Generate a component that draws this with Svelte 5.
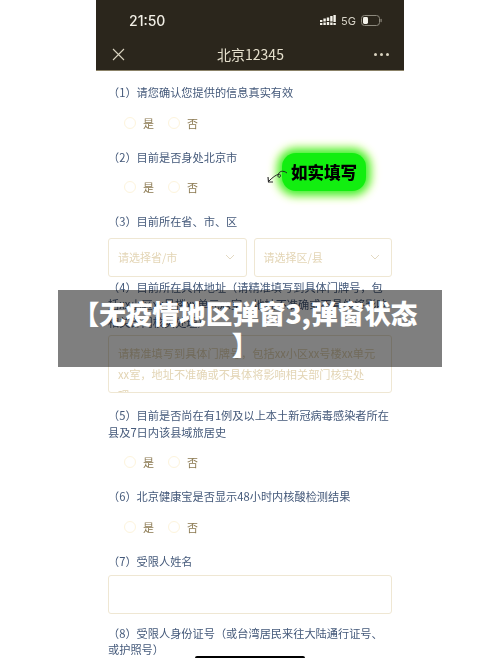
<script>
  const yesNo = ['是', '否'];
</script>

<div class="phone">
  <header class="top">
    <div class="status">
      <span class="time">21:50</span>
      <div class="status-right">
        <svg class="signal" width="16" height="11" viewBox="0 0 16 11">
          <rect x="0" y="5" width="2.4" height="2" />
          <rect x="0" y="8" width="2.4" height="2" />
          <rect x="3.4" y="3.5" width="2.4" height="3" />
          <rect x="3.4" y="7.5" width="2.4" height="2.5" />
          <rect x="6.8" y="2.5" width="2.4" height="3.5" />
          <rect x="6.8" y="7" width="2.4" height="3" />
          <rect x="10.2" y="1" width="2.4" height="5.5" />
          <rect x="10.2" y="7.5" width="2.4" height="2.5" />
          <rect x="13.4" y="0" width="2.4" height="7" />
          <rect x="13.4" y="8" width="2.4" height="2" />
        </svg>
        <span class="net">5G</span>
        <svg class="battery" width="21" height="11" viewBox="0 0 21 11">
          <rect x="0.5" y="0.5" width="18" height="10" rx="3" fill="none" stroke="#8d897d" />
          <rect x="2" y="2" width="5" height="7" rx="1.4" fill="#f4f2ea" />
          <rect x="19.5" y="3.8" width="1.2" height="3.4" rx="0.6" fill="#8d897d" />
        </svg>
      </div>
    </div>
    <nav class="bar">
      <svg class="close" width="13" height="13" viewBox="0 0 13 13">
        <path d="M1 1 L12 12 M12 1 L1 12" fill="none" stroke="#d9d3c0" stroke-width="1.1" />
      </svg>
      <span class="title">北京12345</span>
      <div class="more"><i></i><i></i><i></i></div>
    </nav>
  </header>

  <main class="form">
    <p class="q first">（1）请您确认您提供的信息真实有效</p>
    <div class="radios">
      {#each yesNo as opt}
        <span class="radio"></span><span class="opt">{opt}</span>
      {/each}
    </div>

    <p class="q">（2）目前是否身处北京市</p>
    <div class="radios">
      {#each yesNo as opt}
        <span class="radio"></span><span class="opt">{opt}</span>
      {/each}
    </div>

    <p class="q">（3）目前所在省、市、区</p>
    <div class="selects">
      <div class="select">
        <span>请选择省/市</span>
        <svg width="10" height="6" viewBox="0 0 10 6"><path d="M1 1 L5 5 L9 1" fill="none" stroke="#e3d9c2" stroke-width="1" /></svg>
      </div>
      <div class="select">
        <span>请选择区/县</span>
        <svg width="10" height="6" viewBox="0 0 10 6"><path d="M1 1 L5 5 L9 1" fill="none" stroke="#e3d9c2" stroke-width="1" /></svg>
      </div>
    </div>

    <p class="q q4">（4）目前所在具体地址（请精准填写到具体门牌号，包括xx小区xx号楼xx单元xx室，地址不准确或不具体将影响相关部门核实处理）</p>
    <div class="textarea">请精准填写到具体门牌号，包括xx小区xx号楼xx单元<br />xx室，地址不准确或不具体将影响相关部门核实处<br />理</div>

    <p class="q q5">（5）目前是否尚在有1例及以上本土新冠病毒感染者所在县及7日内该县域旅居史</p>
    <div class="radios">
      {#each yesNo as opt}
        <span class="radio"></span><span class="opt">{opt}</span>
      {/each}
    </div>

    <p class="q">（6）北京健康宝是否显示48小时内核酸检测结果</p>
    <div class="radios">
      {#each yesNo as opt}
        <span class="radio"></span><span class="opt">{opt}</span>
      {/each}
    </div>

    <p class="q">（7）受限人姓名</p>
    <div class="input"></div>

    <p class="q q8">（8）受限人身份证号（或台湾居民来往大陆通行证号、或护照号）</p>
  </main>

  <div class="sticker">如实填写</div>
  <svg class="arrow" width="22" height="15" viewBox="0 0 22 15">
    <path d="M21 4 C17 1 13 2 12 6 C11.5 9 14.5 9 14.5 6.5 C14.5 4 10 5 3 12" fill="none" stroke="#222" stroke-width="1" />
    <path d="M2 8 L2.5 13 L7 13" fill="none" stroke="#222" stroke-width="1.1" />
  </svg>
  <div class="home"></div>
</div>

<div class="banner">【无疫情地区弹窗3,弹窗状态】</div>

<style>
  :global(body) {
    margin: 0;
    background: #fff;
    font-family: "Noto Sans CJK SC", "Liberation Sans", sans-serif;
  }

  .phone {
    position: relative;
    width: 308px;
    height: 658px;
    margin-left: 96px;
    overflow: hidden;
    background: #fff;
    filter: blur(0.5px);
  }

  .top {
    height: 71px;
    background: #2b261c;
    border-bottom: 1px solid #8b8268;
    box-sizing: border-box;
    color: #f2efe6;
  }

  .status {
    height: 41px;
    display: flex;
    align-items: center;
    justify-content: space-between;
    padding: 0 22px 0 33px;
  }

  .time {
    font-family: Inter, "Liberation Sans", sans-serif;
    font-size: 14px;
    font-weight: 500;
  }

  .status-right {
    display: flex;
    align-items: center;
    gap: 5px;
  }

  .signal {
    fill: #f4f2ea;
  }

  .net {
    font-family: Inter, "Liberation Sans", sans-serif;
    font-size: 11px;
    color: #d8d4c8;
  }

  .bar {
    height: 26px;
    display: flex;
    align-items: center;
    justify-content: space-between;
    padding: 0 15px 0 16px;
  }

  .title {
    font-size: 14px;
    color: #e6e0cd;
    margin-left: 2px;
  }

  .more {
    display: flex;
    gap: 3px;
  }

  .more i {
    width: 3px;
    height: 3px;
    border-radius: 50%;
    background: #d9d3c0;
  }

  .form {
    padding: 0 12px;
  }

  .q {
    margin: 19px 0 0;
    max-width: 281px;
    font-size: 11.2px;
    line-height: 16.5px;
    color: #44597a;
  }

  .first {
    margin-top: 13px;
  }

  .radios {
    display: flex;
    align-items: center;
    height: 14px;
    margin-top: 15px;
    padding-left: 16px;
  }

  .radio {
    width: 12px;
    height: 12px;
    border: 1px solid #fdf4dc;
    border-radius: 50%;
    box-sizing: border-box;
    margin-right: 7px;
  }

  .opt {
    font-size: 11px;
    color: #8a7850;
    margin-right: 14px;
  }

  .selects {
    display: flex;
    gap: 7px;
    margin-top: 8px;
  }

  .select {
    flex: 1;
    height: 39px;
    display: flex;
    align-items: center;
    justify-content: space-between;
    padding: 0 11px 0 9px;
    border: 1px solid #efe7d3;
    border-radius: 3px;
    box-sizing: border-box;
    font-size: 11px;
    color: #e3d5b5;
  }

  .q4 {
    margin-top: 2px;
    line-height: 17.5px;
  }

  .textarea {
    height: 58px;
    margin-top: 4px;
    padding: 7px 9px 0;
    border: 1px solid #efe7d3;
    border-radius: 3px;
    box-sizing: border-box;
    overflow: hidden;
    font-size: 11.2px;
    line-height: 21px;
    color: #e3d5b5;
  }

  .q5 {
    margin-top: 14px;
  }

  .input {
    height: 39px;
    margin-top: 6px;
    border: 1px solid #efe7d3;
    border-radius: 3px;
    box-sizing: border-box;
  }

  .q8 {
    margin-top: 10.5px;
  }

  .sticker {
    position: absolute;
    left: 186px;
    top: 153px;
    width: 84px;
    height: 38px;
    display: flex;
    align-items: center;
    justify-content: center;
    border-radius: 14px;
    background: #12ee10;
    box-shadow: 0 0 9px 4px #3cf02c, 0 0 8px 8px #f6fdc9;
    font-size: 16.5px;
    font-weight: 900;
    color: #000;
    white-space: nowrap;
  }

  .arrow {
    position: absolute;
    left: 170px;
    top: 169px;
  }

  .home {
    position: absolute;
    left: 99px;
    bottom: 0;
    width: 110px;
    height: 2px;
    border-radius: 2px 2px 0 0;
    background: #000;
  }

  .banner {
    position: absolute;
    left: 58px;
    top: 290px;
    width: 384px;
    height: 77px;
    box-sizing: border-box;
    padding: 7px 21px 7px 11px;
    background: rgba(0, 0, 0, 0.5);
    color: #fff;
    font-size: 26.6px;
    font-weight: 900;
    line-height: 31px;
    text-align: center;
    line-break: anywhere;
  }
</style>
